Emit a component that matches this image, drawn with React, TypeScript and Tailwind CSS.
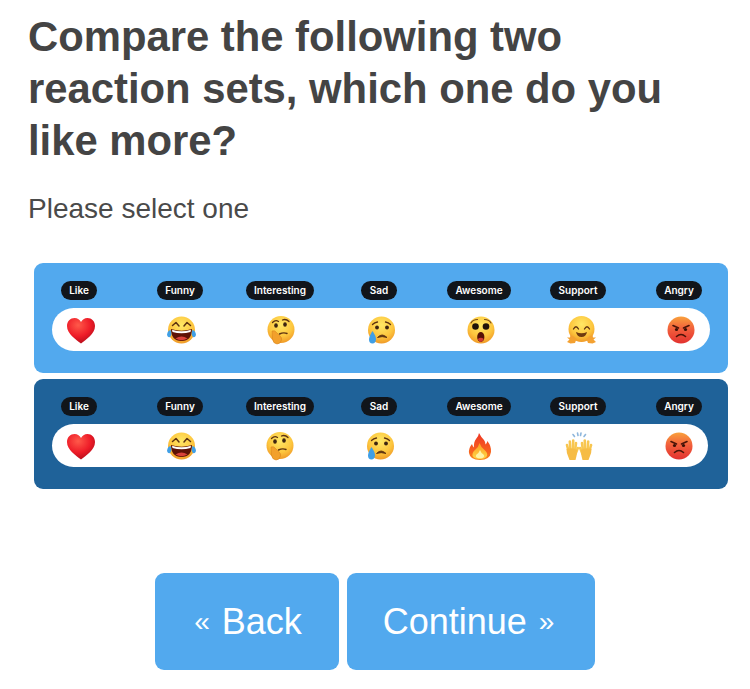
import React from "react";

function Defs() {
  return (
    <defs>
      <radialGradient id="face" cx="0.5" cy="0.32" r="0.72">
        <stop offset="0" stopColor="#ffe866" />
        <stop offset="0.6" stopColor="#fdc63e" />
        <stop offset="1" stopColor="#ee9324" />
      </radialGradient>
      <linearGradient id="angry" x1="0" y1="0" x2="0" y2="1">
        <stop offset="0" stopColor="#f9a13c" />
        <stop offset="0.45" stopColor="#f2603c" />
        <stop offset="1" stopColor="#e2312f" />
      </linearGradient>
      <radialGradient id="heart" cx="0.4" cy="0.28" r="0.8">
        <stop offset="0" stopColor="#ff5a4a" />
        <stop offset="0.55" stopColor="#ee1c28" />
        <stop offset="1" stopColor="#a80a18" />
      </radialGradient>
      <linearGradient id="flame" x1="0" y1="0" x2="0" y2="1">
        <stop offset="0" stopColor="#ee3524" />
        <stop offset="0.7" stopColor="#f8641f" />
        <stop offset="1" stopColor="#f88a1c" />
      </linearGradient>
      <linearGradient id="flameIn" x1="0" y1="0" x2="0" y2="1">
        <stop offset="0" stopColor="#fb9a20" />
        <stop offset="1" stopColor="#ffd84a" />
      </linearGradient>
    </defs>
  );
}

function Icon({ children }: { children: React.ReactNode }) {
  return (
    <svg viewBox="0 0 28 28" className="w-[28px] h-[28px] shrink-0 overflow-visible blur-[0.4px]">
      <Defs />
      {children}
    </svg>
  );
}

const Heart = () => (
  <Icon>
    <path
      d="M14 27.500C9 23.500 0 18 0 10C0 5 3.500 2 7.500 2C10.500 2 13 3.700 14 6C15 3.700 17.500 2 20.500 2C24.500 2 28 5 28 10C28 18 19 23.500 14 27.500Z"
      fill="url(#heart)"
    />
  </Icon>
);

const Joy = () => (
  <Icon>
    <circle cx="14.500" cy="14" r="13.500" fill="url(#face)" />
    <path d="M5.500 9.500L9 6.500L12 10" fill="none" stroke="#5d3210" strokeWidth="1.500" strokeLinecap="round" strokeLinejoin="round" />
    <path d="M17 10L20 6.500L23.500 9.500" fill="none" stroke="#5d3210" strokeWidth="1.500" strokeLinecap="round" strokeLinejoin="round" />
    <path d="M4 13Q14.500 16.500 25 13Q25 25 14.500 25Q4 25 4 13Z" fill="#5e1206" />
    <path d="M5 13.800Q14.500 16.800 24 13.800L23.500 16Q14.500 18.500 5.500 16Z" fill="#fff" />
    <path d="M8.500 22.500Q14.500 18.500 20.500 22.500Q14.500 26 8.500 22.500Z" fill="#d9423a" />
    <path d="M0 19Q0.500 14.500 3.500 14Q5.500 18.500 3 21Q1 22 0 19Z" fill="#3f9fe6" />
    <path d="M29 19Q28.500 14.500 25.500 14Q23.500 18.500 26 21Q28 22 29 19Z" fill="#3f9fe6" />
  </Icon>
);

const Thinking = () => (
  <Icon>
    <circle cx="14" cy="13.500" r="13.500" fill="url(#face)" />
    <path d="M5.500 6.500Q8.500 3.500 11.500 5.500" fill="none" stroke="#5d3210" strokeWidth="1.300" strokeLinecap="round" />
    <path d="M15.500 4Q19 2.500 22 5.500" fill="none" stroke="#5d3210" strokeWidth="1.300" strokeLinecap="round" />
    <ellipse cx="9" cy="9.500" rx="1.800" ry="2.200" fill="#3d2410" />
    <ellipse cx="18" cy="8.500" rx="1.800" ry="2.200" fill="#3d2410" />
    <path d="M12.500 18Q16.500 16 20 17.500" fill="none" stroke="#5d3210" strokeWidth="1.400" strokeLinecap="round" />
    <path
      d="M5 15Q8 14 9.500 16.500L13 20Q15 21.500 14.500 24Q13.500 28 10 28Q6 27.500 5.500 23Z"
      fill="#f2a02c"
      stroke="#d9841c"
      strokeWidth="0.600"
    />
  </Icon>
);

const Crying = () => (
  <Icon>
    <circle cx="14.500" cy="14" r="13.500" fill="url(#face)" />
    <path d="M5.500 8.500Q7.500 6.500 10.500 6" fill="none" stroke="#5d3210" strokeWidth="1.300" strokeLinecap="round" />
    <path d="M18.500 6Q21.500 6.500 23.500 8.500" fill="none" stroke="#5d3210" strokeWidth="1.300" strokeLinecap="round" />
    <circle cx="10" cy="11.500" r="1.900" fill="#3d2410" />
    <circle cx="20" cy="11.500" r="1.900" fill="#3d2410" />
    <path d="M10.500 21.500Q15 16.500 20 21.500Q15 19.800 10.500 21.500Z" fill="#5d3210" stroke="#5d3210" strokeWidth="0.900" strokeLinejoin="round" />
    <path d="M5.500 15Q9 20 9 23.500Q8.500 27.500 5.500 27.500Q2 27.500 2 23.500Q2.200 20 5.500 15Z" fill="#3f9fe6" />
  </Icon>
);

const Wow = () => (
  <Icon>
    <circle cx="14" cy="14" r="13.500" fill="url(#face)" />
    <path d="M4 7Q6 3.500 10.500 3.500" fill="none" stroke="#7a4a16" strokeWidth="1.100" strokeLinecap="round" />
    <path d="M17.500 3.500Q22 3.500 24 7" fill="none" stroke="#7a4a16" strokeWidth="1.100" strokeLinecap="round" />
    <circle cx="8.500" cy="10.500" r="3.300" fill="#1f1208" />
    <circle cx="19" cy="10.500" r="3.300" fill="#1f1208" />
    <ellipse cx="13.800" cy="21" rx="3.600" ry="5" fill="#561005" />
    <path d="M10.800 23Q13.800 20.500 16.800 23Q15.500 26 13.800 26Q12 26 10.800 23Z" fill="#d13b33" />
  </Icon>
);

const Hug = () => (
  <Icon>
    <circle cx="14.500" cy="13" r="13" fill="url(#face)" />
    <path d="M6.500 13Q9 8.500 11.500 13" fill="none" stroke="#5d3210" strokeWidth="1.300" strokeLinecap="round" />
    <path d="M17.500 13Q20 8.500 22.500 13" fill="none" stroke="#5d3210" strokeWidth="1.300" strokeLinecap="round" />
    <path d="M9 16Q14.500 18.500 20 16Q19 21 14.500 21Q10 21 9 16Z" fill="#6e3a10" />
    <path d="M0 26L2.500 23.500L0 21.500L3 21.500L3.500 19L6.500 20.500L9.500 23L8 27L3.500 27.500Z" fill="#f4a131" />
    <path d="M29 26L26.500 23.500L29 21.500L26 21.500L25.500 19L22.500 20.500L19.500 23L21 27L25.500 27.500Z" fill="#f4a131" />
  </Icon>
);

const Angry = () => (
  <Icon>
    <circle cx="14" cy="14" r="13.500" fill="url(#angry)" />
    <path d="M6 9.500L11.500 12" stroke="#4a1408" strokeWidth="1.600" strokeLinecap="round" />
    <path d="M22 9.500L16.500 12" stroke="#4a1408" strokeWidth="1.600" strokeLinecap="round" />
    <circle cx="9.500" cy="13.500" r="1.600" fill="#3a1006" />
    <circle cx="18.500" cy="13.500" r="1.600" fill="#3a1006" />
    <path d="M9.500 20.500Q14 16.500 18.500 20.500" fill="none" stroke="#4a1408" strokeWidth="1.600" strokeLinecap="round" />
  </Icon>
);

const Fire = () => (
  <Icon>
    <path
      d="M13 1Q15 5 18 8Q19.500 10 19.500 12.500Q21 11.500 21.300 9Q25.500 14 25 20Q24 28 14 28Q4 28 3 21Q2.500 16 6 12Q6.500 14 8 15.500Q7.500 10 10 7Q12.500 4.500 13 1Z"
      fill="url(#flame)"
    />
    <path d="M13.500 11Q15 15.500 18.500 18Q22 21 21 24Q19.500 27 14 27Q8 27 6.500 24Q6 20.500 9 18Q12.500 15.500 13.500 11Z" fill="url(#flameIn)" />
    <path d="M14 18Q15 21 17.500 22.500Q19 24.500 17 25.800Q14 26.800 11 25.800Q9 24.500 10.500 22.500Q13 21 14 18Z" fill="#fff3a8" />
  </Icon>
);

const Hand = () => (
  <g>
    <g stroke="#f8c650" strokeWidth="2.600" strokeLinecap="round">
      <path d="M3.500 19L2 13" />
      <path d="M5.500 18L4.800 9.500" />
      <path d="M8 18L8.200 8.500" />
      <path d="M10 19L11 11" />
      <path d="M10.500 22L12.800 16" />
    </g>
    <path d="M1.500 17Q7 15 12 18L11.500 24L10.500 28L4.500 28L3 24Q1.500 21 1.500 17Z" fill="#f6bc45" />
  </g>
);

const Hands = () => (
  <Icon>
    <g stroke="#8fb7dc" strokeWidth="1.600" strokeLinecap="round">
      <path d="M8 2.500L9.500 4.500" />
      <path d="M12.500 1L13 3.500" />
      <path d="M16 1L15.500 3.500" />
      <path d="M20.500 2.500L19 4.500" />
    </g>
    <Hand />
    <g transform="matrix(-1 0 0 1 28 0)">
      <Hand />
    </g>
  </Icon>
);

const labels = [
  { text: "Like", shift: "" },
  { text: "Funny", shift: "ml-[2px]" },
  { text: "Interesting", shift: "ml-[2px]" },
  { text: "Sad", shift: "" },
  { text: "Awesome", shift: "" },
  { text: "Support", shift: "mr-[2px]" },
  { text: "Angry", shift: "" },
];

function ReactionPanel({
  bg,
  width,
  icons,
}: {
  bg: string;
  width: string;
  icons: React.ReactNode[];
}) {
  return (
    <div className={`${bg} rounded-[9px] h-[110px] pt-[18px] flex flex-col`}>
      <div className="flex justify-between pl-[15px] pr-[19px]">
        {labels.map((label) => (
          <div key={label.text} className="w-[60px] flex justify-center">
            <span
              className={`${label.shift} shrink-0 whitespace-nowrap h-[19px] px-[8.500px] rounded-full bg-[#11151b] text-white text-[10px] leading-[19px] font-semibold font-['Inter',sans-serif]`}
            >
              {label.text}
            </span>
          </div>
        ))}
      </div>
      <div className={`${width} mt-[8px] ml-[18px] h-[43px] rounded-full bg-white flex items-center justify-between pl-[15px] pr-[15px]`}>
        {icons.map((icon, i) => (
          <div key={i} className="w-[28px] flex justify-center">
            {icon}
          </div>
        ))}
      </div>
    </div>
  );
}

export default function App() {
  return (
    <div className="w-[750px] h-[689px] bg-white overflow-hidden font-['Liberation_Sans',Arial,sans-serif]">
      <div className="pl-[28px] pt-[11px]">
        <h1 className="text-[41.800px] leading-[52px] font-bold text-[#444444] w-[680px]">
          Compare the following two reaction sets, which one do you like more?
        </h1>
        <p className="mt-[26px] text-[28px] leading-[32px] text-[#4a4a4a]">Please select one</p>
      </div>

      <div className="mt-[38px] ml-[34px] w-[694px] flex flex-col gap-[6px]">
        <ReactionPanel
          bg="bg-[#52a9ee]"
          width="w-[658px]"
          icons={[<Heart />, <Joy />, <Thinking />, <Crying />, <Wow />, <Hug />, <Angry />]}
        />
        <ReactionPanel
          bg="bg-[#1f6299]"
          width="w-[656px]"
          icons={[<Heart />, <Joy />, <Thinking />, <Crying />, <Fire />, <Hands />, <Angry />]}
        />
      </div>

      <div className="mt-[84px] flex justify-center gap-[8px]">
        <button className="w-[184px] h-[97px] pl-[2px] rounded-[9px] bg-[#52a9ee] text-white text-[36px]">
          <span className="text-[28px] mr-[2px] align-[3px]">«</span> Back
        </button>
        <button className="w-[248px] h-[97px] pr-[5px] rounded-[9px] bg-[#52a9ee] text-white text-[36px]">
          Continue <span className="text-[28px] ml-[2px] align-[3px]">»</span>
        </button>
      </div>
    </div>
  );
}
